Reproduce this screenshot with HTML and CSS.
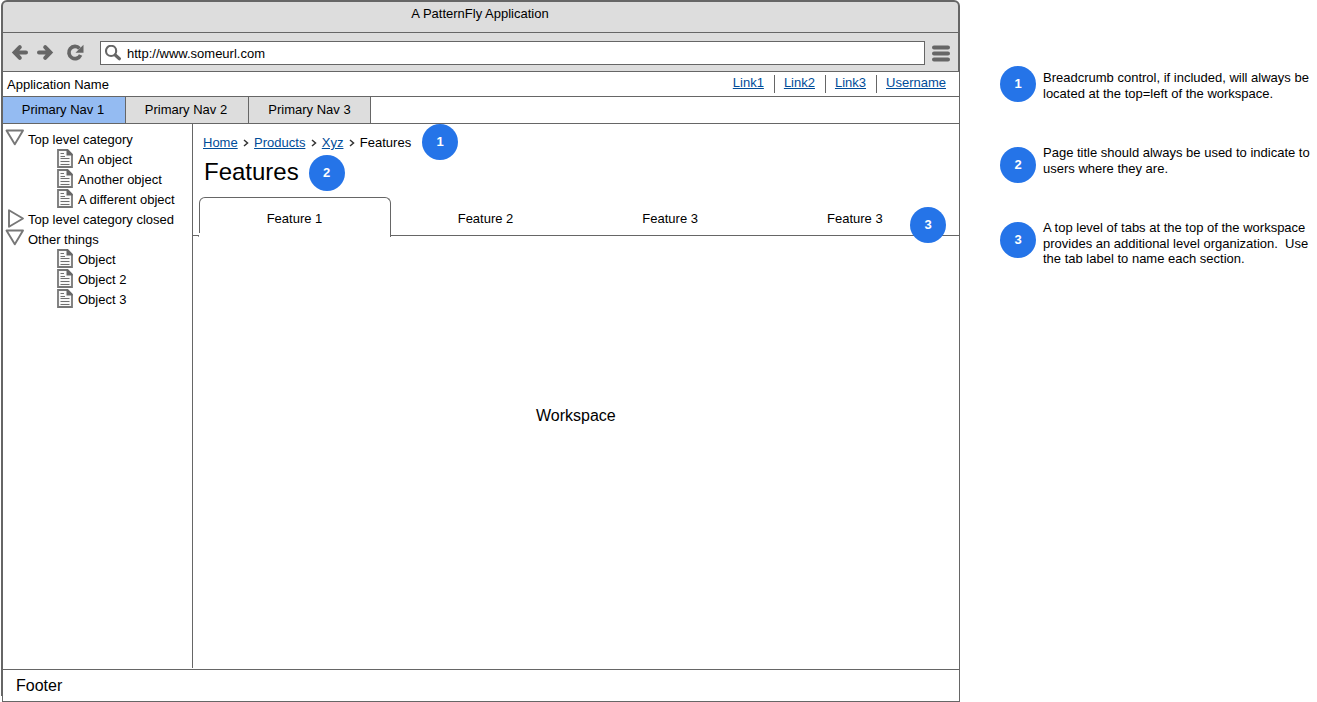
FILE: index.html
```html
<!DOCTYPE html>
<html lang="en">
<head>
<meta charset="utf-8">
<title>A PatternFly Application</title>
<link rel="stylesheet" href="styles.css">
</head>
<body>
<svg class="defs" width="0" height="0" aria-hidden="true">
  <symbol id="doc" viewBox="0 0 16 19">
    <path d="M1 1H10.500L15 5.500V18H1Z" fill="#f8f8f8" stroke="#777" stroke-width="1.800"/>
    <path d="M9.500 .500H11L15.500 5V6.500H9.500Z" fill="#666"/>
    <path d="M3.500 4.500H7M3.500 7.500H8M3.500 9.500H12.500M3.500 12.500H12.500M3.500 15.500H12.500" stroke="#707070" stroke-width="1.100"/>
  </symbol>
  <symbol id="open" viewBox="0 0 20 18">
    <path d="M1.500 1.500H18L9.800 15.300Z" fill="#fff" stroke="#777" stroke-width="1.900" stroke-linejoin="round"/>
  </symbol>
  <symbol id="closed" viewBox="0 0 20 20">
    <path d="M4 1.300V17.700L18 9.500Z" fill="#fff" stroke="#777" stroke-width="1.900" stroke-linejoin="round"/>
  </symbol>
  <symbol id="sep" viewBox="0 0 6 8">
    <path d="M1 1L4.500 4L1 7" fill="none" stroke="#333" stroke-width="1.500"/>
  </symbol>
</svg>
<div class="page">
  <div class="window">
    <header class="chrome">
      <div class="titlebar"><span>A PatternFly Application</span></div>
      <div class="toolbar">
        <svg class="nav-icons" width="76" height="20" viewBox="0 0 76 20">
          <g fill="none" stroke="#666" stroke-width="4">
            <path d="M9.800 4.200L4.600 9.500L9.800 14.800M5 9.500H16" stroke-linecap="round"/>
            <path d="M35.200 4.200L40.400 9.500L35.200 14.800M40 9.500H29" stroke-linecap="round"/>
            <path d="M69.500 5.400A6.100 6.100 0 1 0 70.600 12" stroke-width="3.700"/>
          </g>
          <path d="M73.500 1.800V9.800H65.500Z" fill="#666"/>
        </svg>
        <div class="address">
          <svg width="18" height="18" viewBox="0 0 18 18" fill="none" stroke="#666"><circle cx="6.100" cy="5.900" r="5.100" stroke-width="2.100"/><path d="M10.200 10L14.400 13.700" stroke-width="3.200" stroke-linecap="round"/></svg>
          <span>http://www.someurl.com</span>
        </div>
        <svg class="burger" width="18" height="17" viewBox="0 0 18 17" stroke="#666" stroke-width="4" stroke-linecap="round"><path d="M2 2.500H16M2 8.500H16M2 14.500H16"/></svg>
      </div>
    </header>
    <div class="appbar">
      <span class="app-name">Application Name</span>
      <div class="links">
        <a>Link1</a><a>Link2</a><a>Link3</a><a>Username</a>
      </div>
    </div>
    <nav class="primary">
      <div class="item active"><span>Primary Nav 1</span></div>
      <div class="item"><span>Primary Nav 2</span></div>
      <div class="item third"><span>Primary Nav 3</span></div>
    </nav>
    <div class="main">
      <aside class="tree">
        <div class="cat"><svg width="20" height="18"><use href="#open"/></svg><span>Top level category</span></div>
        <div class="obj"><svg width="16" height="19"><use href="#doc"/></svg><span>An object</span></div>
        <div class="obj"><svg width="16" height="19"><use href="#doc"/></svg><span>Another object</span></div>
        <div class="obj"><svg width="16" height="19"><use href="#doc"/></svg><span>A different object</span></div>
        <div class="cat"><svg width="20" height="20"><use href="#closed"/></svg><span>Top level category closed</span></div>
        <div class="cat"><svg width="20" height="18"><use href="#open"/></svg><span>Other things</span></div>
        <div class="obj"><svg width="16" height="19"><use href="#doc"/></svg><span>Object</span></div>
        <div class="obj"><svg width="16" height="19"><use href="#doc"/></svg><span>Object 2</span></div>
        <div class="obj"><svg width="16" height="19"><use href="#doc"/></svg><span>Object 3</span></div>
      </aside>
      <main class="content">
        <div class="crumbs">
          <a>Home</a><svg class="sep" width="6" height="8"><use href="#sep"/></svg><a>Products</a><svg class="sep" width="6" height="8"><use href="#sep"/></svg><a>Xyz</a><svg class="sep" width="6" height="8"><use href="#sep"/></svg><span>Features</span>
          <i class="badge">1</i>
        </div>
        <div class="heading"><h1>Features</h1><i class="badge">2</i></div>
        <div class="tabs">
          <div class="tab"><span>Feature 1</span></div>
          <div class="rest">
            <span>Feature 2</span><span>Feature 3</span><span>Feature 3</span>
          </div>
          <i class="badge floating">3</i>
        </div>
        <div class="workspace"><span>Workspace</span></div>
      </main>
    </div>
    <footer class="footer"><span>Footer</span></footer>
  </div>
  <section class="notes">
    <div class="note"><i class="badge">1</i><p><span>Breadcrumb control, if included, will always be</span><br><span>located at the top=left of the workspace.</span></p></div>
    <div class="note"><i class="badge">2</i><p><span>Page title should always be used to indicate to</span><br><span>users where they are.</span></p></div>
    <div class="note"><i class="badge">3</i><p><span>A top level of tabs at the top of the workspace</span><br><span>provides an additional level organization.&nbsp; Use</span><br><span>the tab label to name each section.</span></p></div>
  </section>
</div>
</body>
</html>
```
FILE: styles.css
```css
* { box-sizing: border-box; }
body { margin: 0; background: #fff; color: #000; font: 13px/16px "Liberation Sans", Arial, sans-serif; overflow: hidden; }
svg { display: block; flex: none; }
span, a { white-space: nowrap; }
a { color: #004c99; text-decoration: underline; }
.defs { position: absolute; }
.page { display: flex; width: 1317px; height: 702px; padding-left: 1px; }
.window { width: 959px; height: 702px; display: flex; flex-direction: column; flex: none; }
.chrome { height: 72px; background: #ddd; border: 2px solid #666; border-bottom-width: 1px; border-radius: 6px 6px 0 0; }
.titlebar { height: 31px; border-bottom: 1px solid #666; text-align: center; padding: 4px 1px 0 0; }
.toolbar { display: flex; height: 38px; padding: 8px 6px 0 8px; }
.nav-icons { margin: 2px 0 0 -1px; }
.address { display: flex; width: 825px; height: 24px; margin-left: 14px; background: #fff; border: 1px solid #666; padding: 3px 0 0 4px; }
.address span { margin: 1px 0 0 4px; }
.burger { margin: 4px 0 0 7px; }
.appbar { height: 25px; display: flex; justify-content: space-between; border: solid #666; border-width: 0 1px 1px 2px; padding-left: 4px; }
.app-name { margin-top: 5px; }
.links { display: flex; padding: 3px 3px 0 0; }
.links a { height: 18px; padding: 0 10px 0 9px; border-left: 1px solid #666; }
.links a:first-child { border: 0; }
.primary { display: flex; height: 27px; border: solid #666; border-width: 0 1px 1px 2px; text-align: center; }
.item { width: 123px; background: #ddd; border-right: 1px solid #666; padding: 5px 2px 0 0; }
.item.active { background: #94bbf2; }
.item.third { width: 122px; padding-right: 0; }
.main { display: flex; flex: 1; border: solid #666; border-width: 0 1px 0 2px; }
.tree { width: 190px; height: 544px; border-right: 1px solid #666; padding-top: 5px; }
.cat, .obj { display: flex; height: 20px; }
.cat { padding-left: 2px; }
.cat svg { margin-right: 3px; }
.cat span, .obj span { margin-top: 3px; }
.obj { padding-left: 54px; }
.obj svg { margin-right: 5px; }
.content { flex: 1; display: flex; flex-direction: column; }
.badge { display: flex; align-items: center; justify-content: center; flex: none; width: 36px; height: 36px; border-radius: 50%; background: #2574e8; color: #fff; font-style: normal; font-weight: bold; }
.crumbs { display: flex; height: 31px; padding-left: 10px; }
.crumbs a, .crumbs span { margin-top: 11px; }
.sep { margin: 15px 4.900px 0 5.500px; }
.crumbs .badge { margin-left: 11px; }
.heading { display: flex; height: 42px; padding-left: 11px; }
h1 { margin: 2px 0 0; font-size: 24px; line-height: 30px; font-weight: normal; }
.heading .badge { margin-left: 10px; }
.tabs { position: relative; display: flex; height: 40px; padding-left: 6px; background: linear-gradient(#666, #666) 0 38px / 6px 1px no-repeat, linear-gradient(#999, #999) 5px 38px / 1px 2px no-repeat; }
.tab { position: relative; width: 192px; height: 40px; border: 1px solid #666; border-bottom: 0; border-radius: 6px 6px 0 0; text-align: center; padding: 13px 1px 0 0; }
.tab::after { content: ""; position: absolute; left: -1px; bottom: 0; width: 1px; height: 4px; background: #fff; }
.rest { display: flex; flex: 1; height: 39px; border-bottom: 1px solid #666; padding: 14px 0 0 66.700px; gap: 129px; }
.floating { position: absolute; left: 717px; top: 10px; }
.workspace { flex: 1; padding: 169px 0 0 343px; font-size: 16px; line-height: 20px; }
.footer { position: relative; height: 33px; margin-left: 1px; border: 1px solid #666; padding: 6px 0 0 13px; font-size: 16px; line-height: 20px; }
.footer::before { content: ""; position: absolute; left: -2px; top: -1px; width: 1px; height: 27px; background: #666; }
.notes { display: flex; flex-direction: column; padding: 66px 0 0 40px; }
.note { display: flex; height: 81px; }
.note:nth-child(2) { height: 75px; }
.note p { margin: 4px 0 0 7px; line-height: 15.500px; }
.note:nth-child(n+2) p { margin-top: -2px; }
```
